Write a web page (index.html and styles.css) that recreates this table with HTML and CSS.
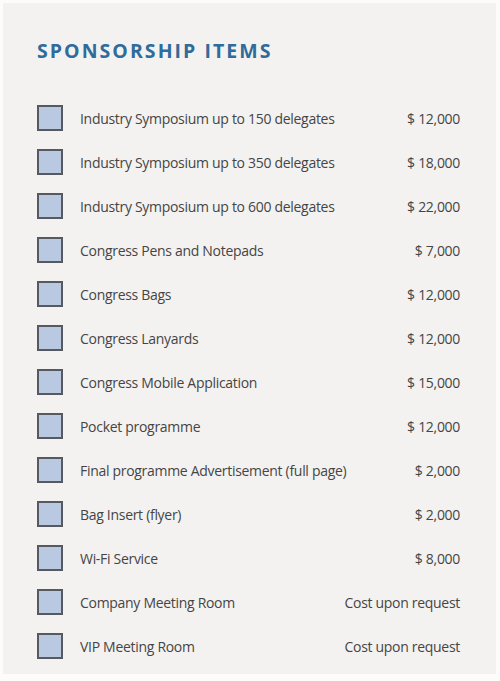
FILE: index.html
```html
<!DOCTYPE html>
<html>
<head>
<meta charset="utf-8">
<link rel="stylesheet" href="styles.css">
</head>
<body>
<div class="panel">
  <h1 class="title">SPONSORSHIP ITEMS</h1>
  <ul class="items">
    <li class="item"><span class="box"></span><span class="name">Industry Symposium up to 150 delegates</span><span class="price">$ 12,000</span></li>
    <li class="item"><span class="box"></span><span class="name">Industry Symposium up to 350 delegates</span><span class="price">$ 18,000</span></li>
    <li class="item"><span class="box"></span><span class="name">Industry Symposium up to 600 delegates</span><span class="price">$ 22,000</span></li>
    <li class="item"><span class="box"></span><span class="name">Congress Pens and Notepads</span><span class="price">$ 7,000</span></li>
    <li class="item"><span class="box"></span><span class="name">Congress Bags</span><span class="price">$ 12,000</span></li>
    <li class="item"><span class="box"></span><span class="name">Congress Lanyards</span><span class="price">$ 12,000</span></li>
    <li class="item"><span class="box"></span><span class="name">Congress Mobile Application</span><span class="price">$ 15,000</span></li>
    <li class="item"><span class="box"></span><span class="name">Pocket programme</span><span class="price">$ 12,000</span></li>
    <li class="item"><span class="box"></span><span class="name">Final programme Advertisement (full page)</span><span class="price">$ 2,000</span></li>
    <li class="item"><span class="box"></span><span class="name">Bag Insert (flyer)</span><span class="price">$ 2,000</span></li>
    <li class="item"><span class="box"></span><span class="name">Wi-Fi Service</span><span class="price">$ 8,000</span></li>
    <li class="item"><span class="box"></span><span class="name">Company Meeting Room</span><span class="price">Cost upon request</span></li>
    <li class="item"><span class="box"></span><span class="name">VIP Meeting Room</span><span class="price">Cost upon request</span></li>
  </ul>
</div>
</body>
</html>
```
FILE: styles.css
```css
html, body {
  margin: 0;
  padding: 0;
  background: #fdfcfb;
}
body {
  padding: 3px 4px 7px 3px;
  width: 500px;
  height: 681px;
  box-sizing: border-box;
  font-family: "Open Sans", "Noto Sans", sans-serif;
}
.panel {
  background: #f4f2f0;
  height: 100%;
  box-sizing: border-box;
  padding: 35px 36px 0 34px;
}
.title {
  margin: 0;
  font-size: 19.5px;
  font-weight: 700;
  letter-spacing: 2.05px;
  color: #2f6b9b;
  line-height: 26px;
}
.items {
  list-style: none;
  margin: 41px 0 0 0;
  padding: 0;
  display: flex;
  flex-direction: column;
  gap: 18px;
}
.item {
  display: flex;
  align-items: center;
  height: 26px;
  font-size: 14px;
  color: #454545;
}
.box {
  width: 22px;
  height: 22px;
  border: 2px solid #565a60;
  background: #b9c9e2;
  flex: none;
}
.name {
  margin-left: 17px;
  flex: 1;
  letter-spacing: -0.3px;
}
.price {
  letter-spacing: -0.3px;
  text-align: right;
}
```
